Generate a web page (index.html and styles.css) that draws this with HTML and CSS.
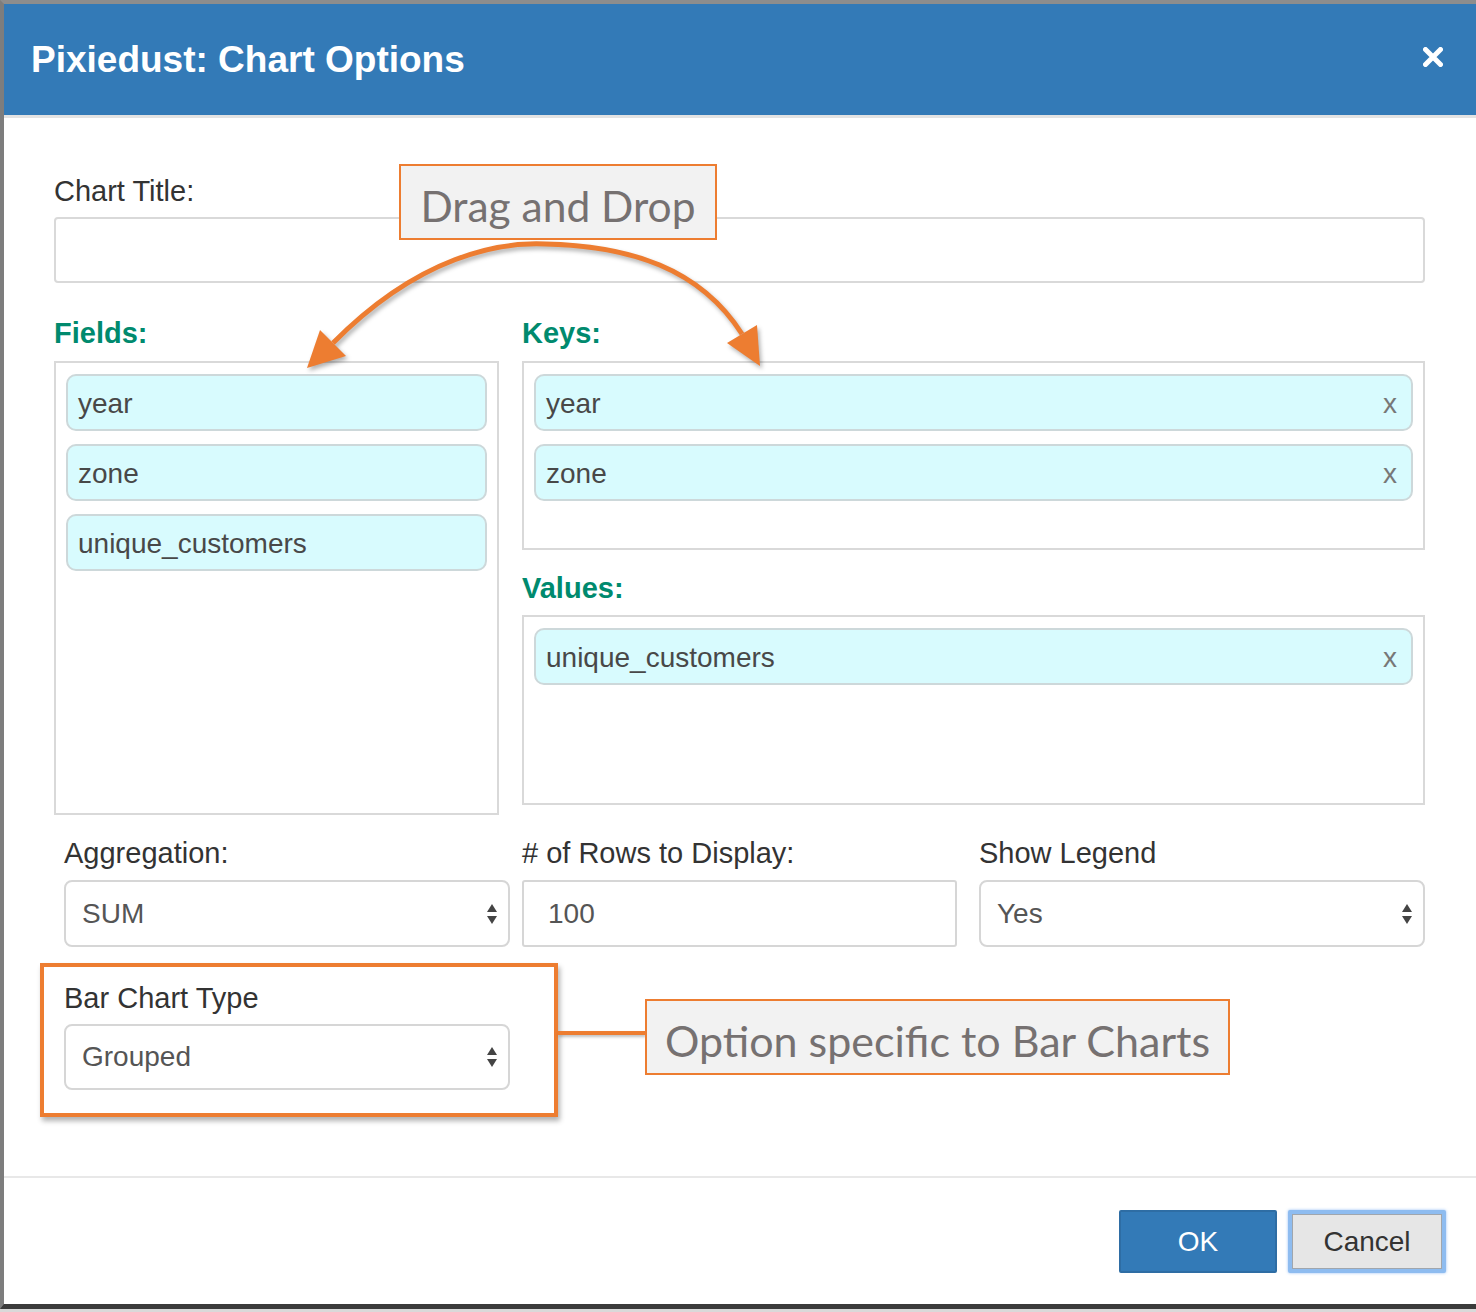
FILE: index.html
```html
<!DOCTYPE html>
<html lang="en">
<head>
<meta charset="utf-8">
<title>Pixiedust: Chart Options</title>
<link rel="stylesheet" href="styles.css">
</head>
<body>
<div class="page">
  <div class="modal">
    <div class="modal-header">
      <h1 class="modal-title">Pixiedust: Chart Options</h1>
      <svg class="close" width="20" height="20" viewBox="0 0 20 20" aria-label="close"><path d="M2.5 2.5 L17.5 17.5 M17.5 2.5 L2.5 17.5" stroke="#fff" stroke-width="5" stroke-linecap="round" fill="none"/></svg>
    </div>
    <div class="modal-body">
      <div class="label">Chart Title:</div>
      <div class="text-input"></div>

      <div class="dnd">
        <div class="col-fields">
          <div class="label green">Fields:</div>
          <div class="drop drop-fields">
            <div class="chip">year</div>
            <div class="chip">zone</div>
            <div class="chip">unique_customers</div>
          </div>
        </div>
        <div class="col-right">
          <div class="label green">Keys:</div>
          <div class="drop drop-keys">
            <div class="chip">year<span class="remove">x</span></div>
            <div class="chip">zone<span class="remove">x</span></div>
          </div>
          <div class="label green values-label">Values:</div>
          <div class="drop drop-values">
            <div class="chip">unique_customers<span class="remove">x</span></div>
          </div>
        </div>
      </div>

      <div class="options">
        <div class="opt">
          <div class="label">Aggregation:</div>
          <div class="select">SUM<svg class="caret" width="12" height="26" viewBox="0 0 12 26"><polygon points="1,11 6,3 11,11" fill="#444"/><polygon points="1,15 6,23 11,15" fill="#444"/></svg></div>
        </div>
        <div class="opt">
          <div class="label"># of Rows to Display:</div>
          <div class="select input-rows">100</div>
        </div>
        <div class="opt opt-legend">
          <div class="label">Show Legend</div>
          <div class="select">Yes<svg class="caret" width="12" height="26" viewBox="0 0 12 26"><polygon points="1,11 6,3 11,11" fill="#444"/><polygon points="1,15 6,23 11,15" fill="#444"/></svg></div>
        </div>
      </div>

      <div class="bar-row">
        <div class="highlight">
          <div class="label">Bar Chart Type</div>
          <div class="select">Grouped<svg class="caret" width="12" height="26" viewBox="0 0 12 26"><polygon points="1,11 6,3 11,11" fill="#444"/><polygon points="1,15 6,23 11,15" fill="#444"/></svg></div>
        </div>
        <div class="connector"></div>
        <div class="callout callout-bar">Option specific to Bar Charts</div>
      </div>
    </div>
    <div class="modal-footer">
      <button class="btn btn-ok">OK</button>
      <button class="btn btn-cancel">Cancel</button>
    </div>
  </div>

  <div class="callout callout-dnd">Drag and Drop</div>
  <svg class="arrow" width="1476" height="420" viewBox="0 0 1476 420">
    <path d="M333 343 C420 255 500 242 545 244 C630 246 700 268 742 334" stroke="#ed7d31" stroke-width="5" fill="none"/>
    <polygon points="307,368 320,330 346,356" fill="#ed7d31"/>
    <polygon points="760,366 757,325 727,343" fill="#ed7d31"/>
  </svg>
</div>
</body>
</html>
```

FILE: styles.css
```css
* { box-sizing: border-box; }

body {
  margin: 0;
  background: #d9d9d9;
  font-family: "Liberation Sans", Arial, sans-serif;
}

.page {
  position: relative;
  width: 1476px;
  height: 1312px;
  overflow: hidden;
  background: #d9d9d9;
}

.modal {
  background: #fff;
  border-left: 4px solid #7d7d7d;
  border-top: 4px solid #8d8d8d;
  border-bottom: 5px solid #3b3b3b;
}

.modal-header {
  height: 114px;
  background: #337ab7;
  border-bottom: 3px solid #e3e3e3;
  display: flex;
  align-items: center;
  justify-content: space-between;
  padding: 0 33px 0 27px;
}

.modal-title {
  margin: 0;
  color: #fff;
  font-size: 37px;
  line-height: 37px;
  font-weight: bold;
}

.close { display: block; margin-top: -6px; }

.modal-body {
  padding: 56px 51px 59px 50px;
}

.label {
  font-size: 29px;
  line-height: 34px;
  color: #333;
}

.label.green {
  color: #008a6e;
  font-weight: bold;
}

.text-input {
  margin-top: 9px;
  height: 66px;
  border: 2px solid #d9d9d9;
  border-radius: 4px;
}

.dnd {
  margin-top: 33px;
  display: grid;
  grid-template-columns: 445px 1fr;
  column-gap: 23px;
}

.drop {
  margin-top: 11px;
  border: 2px solid #d9d9d9;
  padding: 11px 10px;
  display: flex;
  flex-direction: column;
  gap: 13px;
}

.drop-fields { height: 454px; }
.drop-keys { height: 189px; }
.drop-values { height: 190px; margin-top: 10px; }
.values-label { margin-top: 21px; }

.chip {
  height: 57px;
  background: #d8fbfe;
  border: 2px solid #cdd8da;
  border-radius: 10px;
  display: flex;
  align-items: center;
  justify-content: space-between;
  padding: 2px 14px 0 10px;
  font-size: 28px;
  color: #484848;
}

.remove {
  color: #777;
  font-size: 28px;
}

.options {
  margin-top: 21px;
  margin-left: 10px;
  display: grid;
  grid-template-columns: 446px 435px 1fr;
  column-gap: 12px;
}

.opt-legend { padding-left: 10px; }

.select {
  margin-top: 10px;
  height: 67px;
  border: 2px solid #d6d6d6;
  border-radius: 8px;
  display: flex;
  align-items: center;
  justify-content: space-between;
  padding: 0 10px 0 16px;
  font-size: 28px;
  color: #555;
  background: #fff;
}

.input-rows {
  border-radius: 3px;
  padding-left: 24px;
}

.caret { display: block; }

.bar-row {
  margin-top: 16px;
  margin-left: -14px;
  display: flex;
  align-items: center;
}

.highlight {
  width: 518px;
  border: 4px solid #ed7d31;
  padding: 14px 0 23px 20px;
  box-shadow: 2px 4px 5px rgba(0, 0, 0, 0.3);
}

.highlight .select {
  width: 446px;
  height: 66px;
  margin-top: 9px;
}

.connector {
  width: 87px;
  height: 4px;
  background: #ed7d31;
  box-shadow: 1px 2px 3px rgba(0, 0, 0, 0.25);
  margin-top: -14px;
}

.callout {
  background: #f2f2f2;
  border: 2px solid #ed7d31;
  color: #767171;
  font-family: Lato, "Open Sans", sans-serif;
  font-size: 42px;
  display: flex;
  align-items: center;
  justify-content: center;
  white-space: nowrap;
  padding-top: 6px;
}

.callout-bar {
  width: 585px;
  height: 76px;
  margin-top: -6px;
  font-size: 43px;
}

.callout-dnd {
  position: absolute;
  left: 399px;
  top: 164px;
  width: 318px;
  height: 76px;
  font-size: 42.5px;
}

.arrow {
  position: absolute;
  left: 0;
  top: 0;
  pointer-events: none;
  filter: drop-shadow(2px 3px 2px rgba(0, 0, 0, 0.3));
}

.modal-footer {
  border-top: 2px solid #e8e8e8;
  padding: 32px 30px 31px 0;
  display: flex;
  justify-content: flex-end;
  gap: 11px;
}

.btn {
  width: 158px;
  height: 63px;
  font-family: "Liberation Sans", Arial, sans-serif;
  font-size: 28px;
  border-radius: 2px;
  padding: 0;
}

.btn-ok {
  background: #337ab7;
  color: #fff;
  border: 2px solid #2e6da4;
}

.btn-cancel {
  background: #e6e6e6;
  color: #333;
  border: 4px solid #8ebcf0;
  box-shadow: inset 0 0 0 1px #a0a6ad, 0 0 3px rgba(80, 150, 240, 0.6);
}
```
